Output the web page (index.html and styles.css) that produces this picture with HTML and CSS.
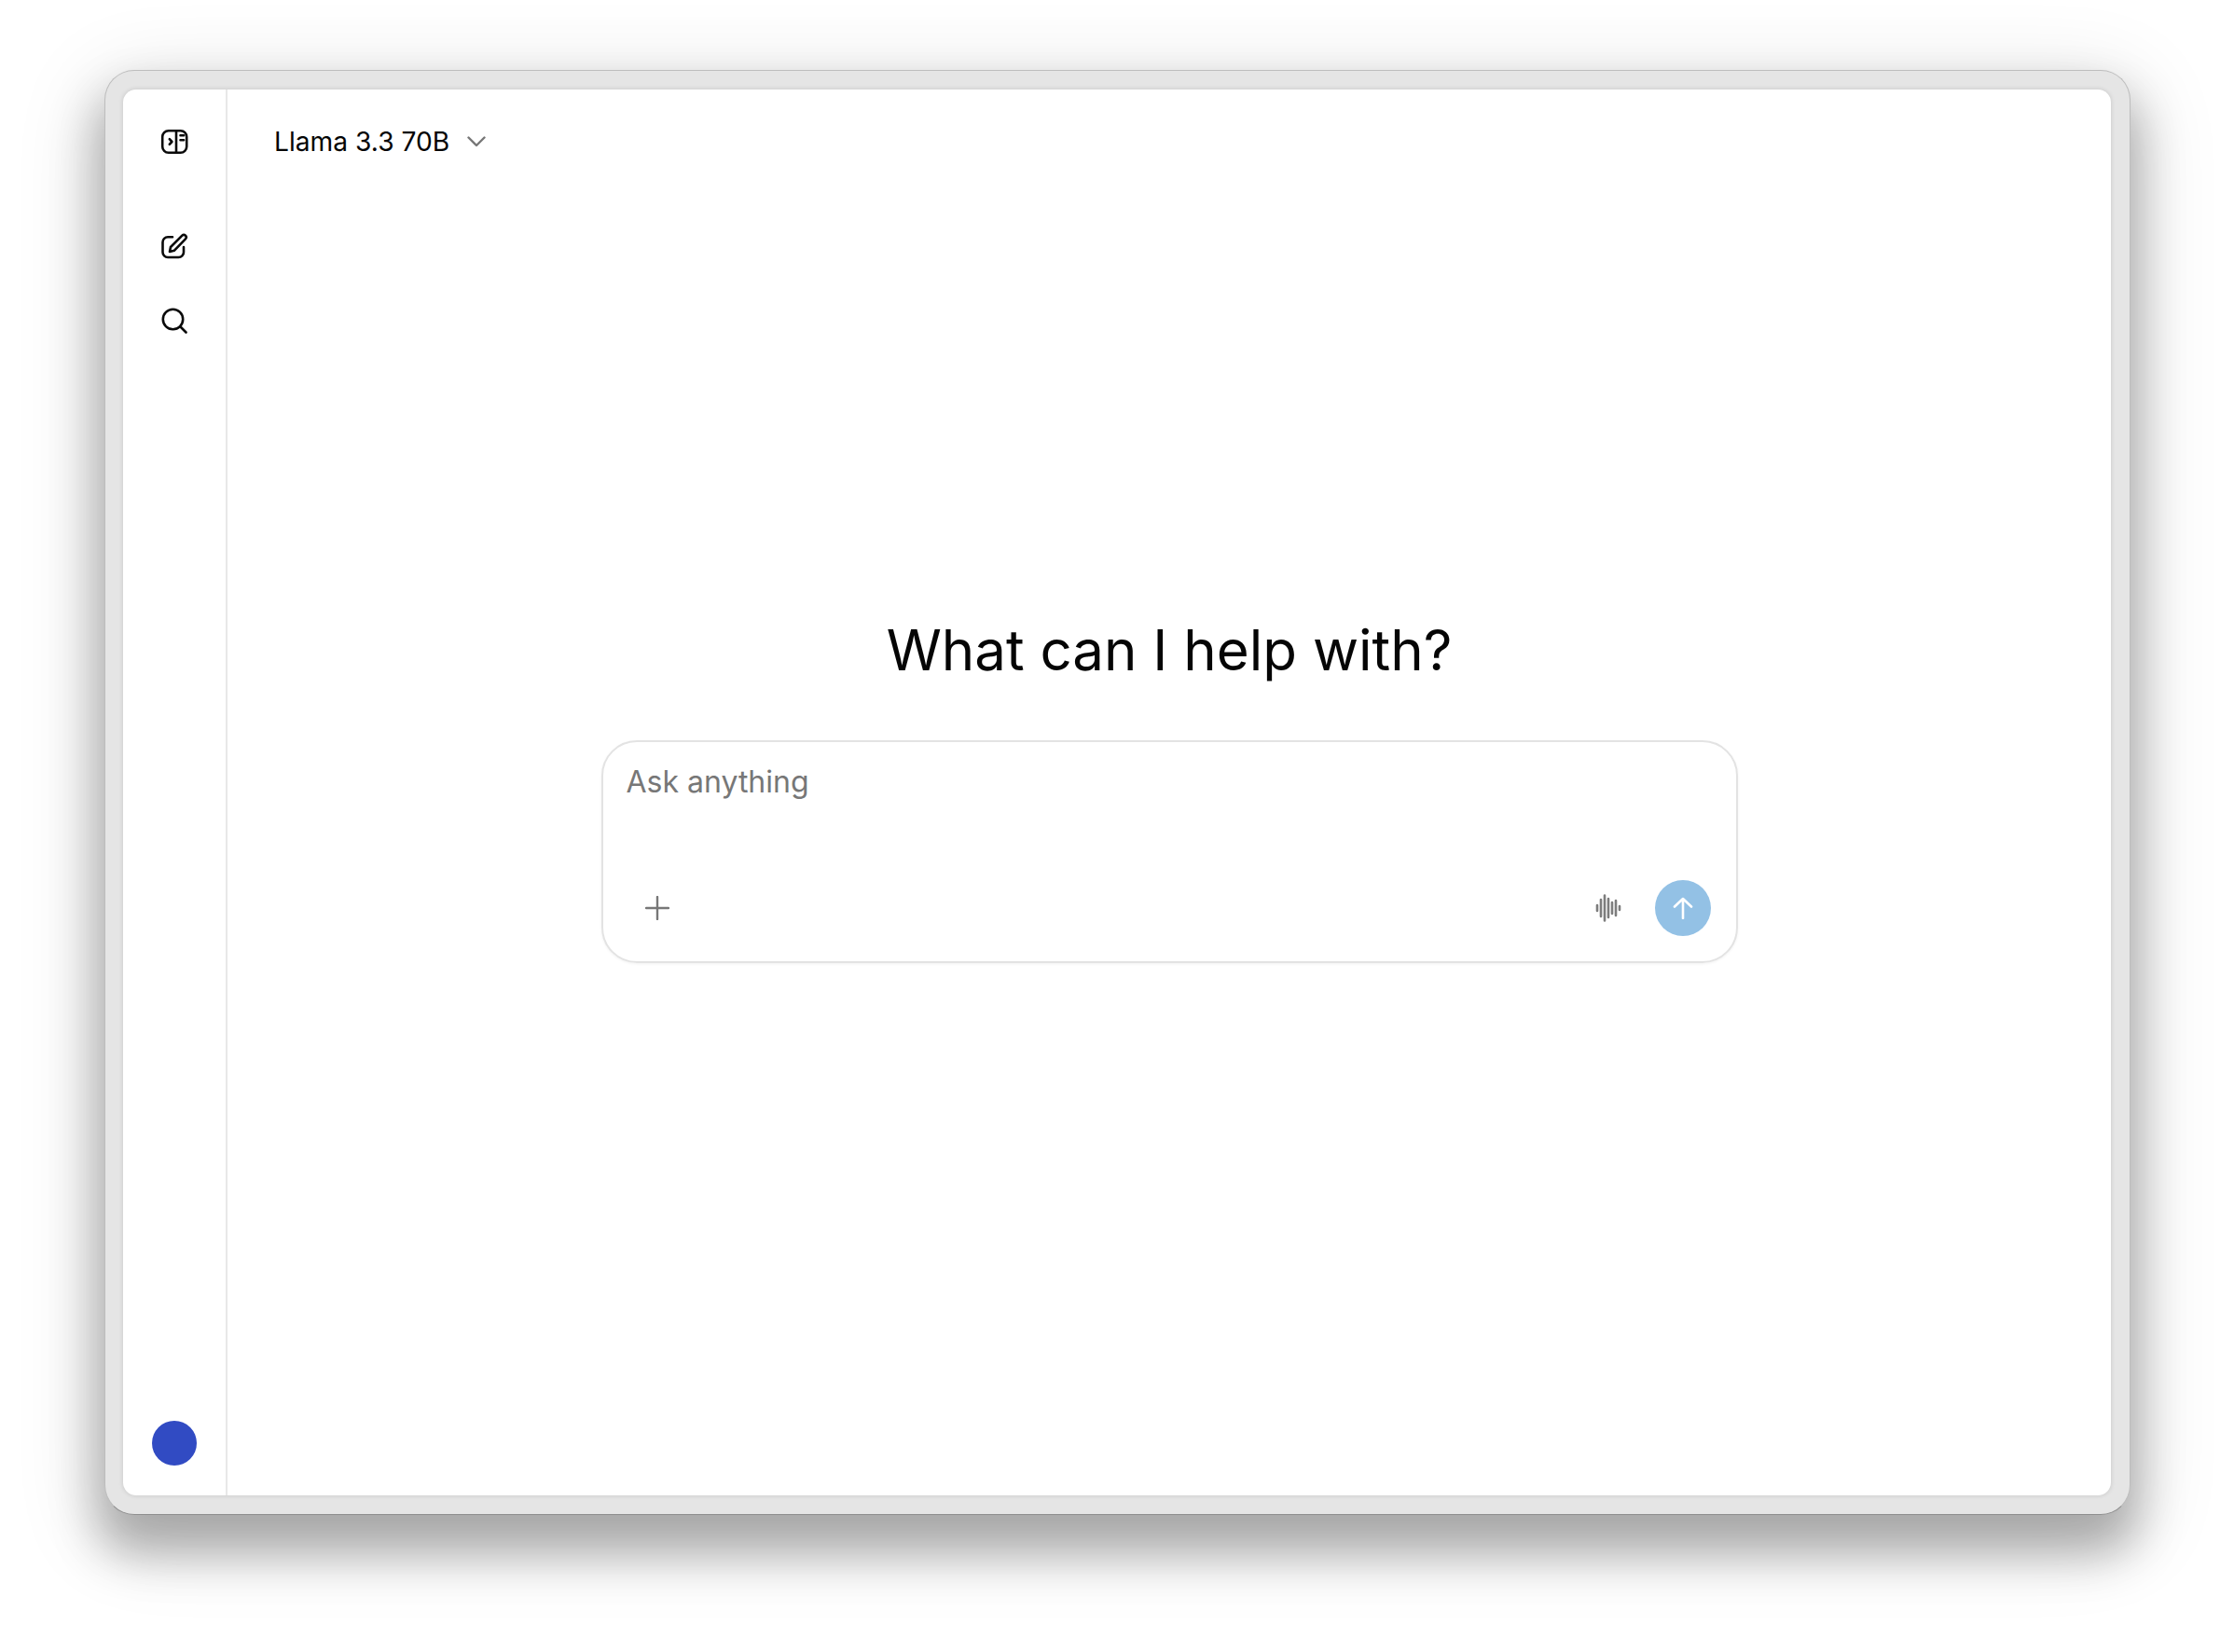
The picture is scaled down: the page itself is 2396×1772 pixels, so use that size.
FILE: index.html
```html
<!DOCTYPE html>
<html lang="en">
<head>
<meta charset="utf-8">
<title>Llama 3.3 70B</title>
<link rel="stylesheet" href="styles.css">
</head>
<body>
<div class="frame">
  <div class="app">
    <aside class="sidebar">
      <svg class="icon icon-panel" viewBox="0 0 30 30"><rect x="2.2" y="3.2" width="26" height="23.6" rx="6.5"/><path d="M17 3.2V26.8M9.8 12.2l2.6 2.8-2.6 2.8M21.5 8.2h3.6M21.5 13.2h3.6"/></svg>
      <svg class="icon icon-edit" viewBox="0 0 30 30"><path d="M13 5.2H8a5.5 5.5 0 0 0-5.5 5.5v10.8A5.5 5.5 0 0 0 8 27h11.5a5.5 5.5 0 0 0 5.5-5.500V16"/><path d="M10 21l1-5L23.3 3.7a2.5 2.5 0 0 1 3.6 3.6L14.8 19.8z"/></svg>
      <svg class="icon icon-search" viewBox="0 0 30 30"><circle cx="13.5" cy="14.5" r="10.7"/><path d="M21.5 22.5l6 6"/></svg>
      <div class="avatar"></div>
    </aside>
    <main class="main">
      <header class="topbar">
        <span class="model">Llama 3.3 70B</span>
        <svg class="chevron" viewBox="0 0 20 12"><path d="M1.5 1.5L10 10l8.5-8.5"/></svg>
      </header>
      <section class="hero">
        <h1 class="title">What can I help with?</h1>
        <div class="composer">
          <div class="placeholder">Ask anything</div>
          <div class="tools">
            <svg class="plus" viewBox="0 0 26 26"><path d="M13 1V25M1 13H25"/></svg>
            <svg class="wave" viewBox="0 0 30 30"><path d="M2 12v6M6 6v18M10 1.500v27M14 5v20M18 9v12M22 7v16M26 13v4"/></svg>
            <button class="send" type="button"><svg class="arrow" viewBox="0 0 24 24"><path d="M12 23V2M3 10.500L12 2l9 8.500"/></svg></button>
          </div>
        </div>
      </section>
    </main>
  </div>
</div>
</body>
</html>
```

FILE: styles.css
```css
* { box-sizing: border-box; }
html, body { margin: 0; height: 100%; background: #fff; }
body {
  display: flex;
  padding: 75px 111px 147px 112px;
  font-family: Inter, "Liberation Sans", sans-serif;
}
.frame {
  flex: 1;
  display: flex;
  padding: 20px 20px 20px 19px;
  background: #e5e5e5;
  border: 1px solid #bdbdbd;
  border-bottom-color: #8f8f8f;
  border-radius: 32px;
  box-shadow:
    0 34px 50px 8px rgba(0,0,0,.28),
    0 20px 90px 10px rgba(0,0,0,.12);
}
.app {
  flex: 1;
  display: flex;
  background: #fff;
  border-radius: 14px;
  overflow: hidden;
  box-shadow: 0 0 4px 1px rgba(0,0,0,.1);
}
.sidebar {
  width: 112px;
  flex: none;
  display: flex;
  flex-direction: column;
  align-items: center;
  padding: 41px 0 32px;
  border-right: 2px solid #e8e8e8;
}
.icon {
  width: 30px;
  height: 30px;
  flex: none;
  fill: none;
  stroke: #0a0a0a;
  stroke-width: 2.6;
  stroke-linecap: round;
  stroke-linejoin: round;
}
.icon-edit { margin-top: 82px; }
.icon-search { margin-top: 49px; }
.avatar {
  margin-top: auto;
  width: 48px;
  height: 48px;
  border-radius: 50%;
  background: #314bc3;
}
.main {
  flex: 1;
  display: flex;
  flex-direction: column;
  min-width: 0;
}
.topbar {
  display: flex;
  align-items: center;
  gap: 19px;
  height: 112px;
  padding-left: 50px;
}
.model { font-size: 28.2px; line-height: 34px; color: #050505; }
.chevron {
  width: 20px;
  height: 12px;
  fill: none;
  stroke: #777;
  stroke-width: 2.4;
  stroke-linecap: round;
  stroke-linejoin: round;
}
.hero {
  display: flex;
  flex-direction: column;
  align-items: center;
  padding-top: 453px;
}
.title {
  margin: 0;
  font-size: 60px;
  line-height: 72px;
  font-weight: 400;
  color: #050505;
}
.composer {
  width: 1219px;
  height: 239px;
  margin-top: 61px;
  display: flex;
  flex-direction: column;
  justify-content: space-between;
  padding: 24px 27px 27px 25px;
  border: 2px solid #e3e3e3;
  border-radius: 38px;
  box-shadow: 0 1px 3px rgba(0,0,0,.06);
}
.placeholder { font-size: 32px; line-height: 38px; color: #777; }
.tools { display: flex; align-items: center; padding-left: 20px; }
.plus {
  width: 26px;
  height: 26px;
  fill: none;
  stroke: #777;
  stroke-width: 2.400;
  stroke-linecap: round;
  margin-right: auto;
}
.wave {
  width: 30px;
  height: 30px;
  fill: none;
  stroke: #7d7d7d;
  stroke-width: 2.600;
  stroke-linecap: round;
  margin-right: 34px;
}
.send {
  width: 60px;
  height: 60px;
  padding: 0;
  border: 0;
  border-radius: 50%;
  background: #93c1e5;
  display: flex;
  align-items: center;
  justify-content: center;
}
.arrow {
  width: 24px;
  height: 24px;
  fill: none;
  stroke: #fff;
  stroke-width: 2.600;
  stroke-linecap: round;
  stroke-linejoin: round;
}
```
